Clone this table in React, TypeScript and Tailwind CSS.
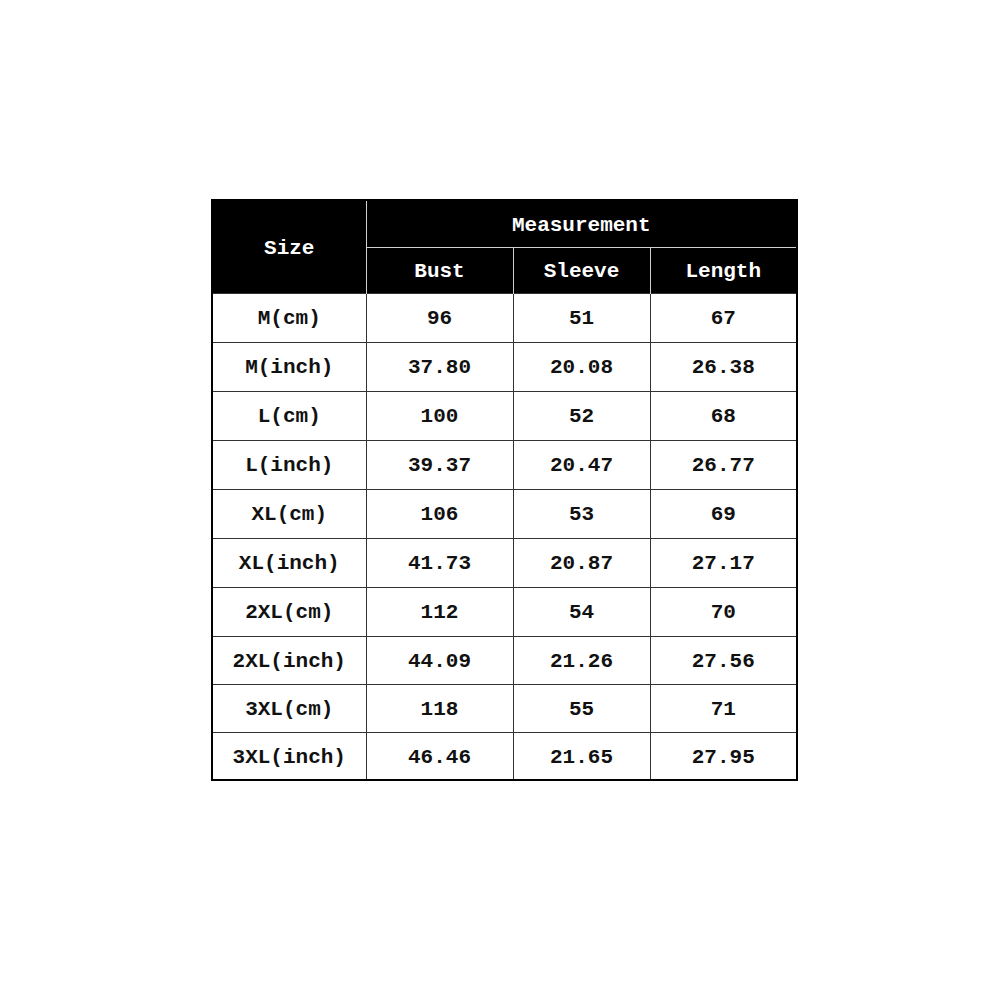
const rows: [string, string, string, string][] = [
  ["M(cm)", "96", "51", "67"],
  ["M(inch)", "37.80", "20.08", "26.38"],
  ["L(cm)", "100", "52", "68"],
  ["L(inch)", "39.37", "20.47", "26.77"],
  ["XL(cm)", "106", "53", "69"],
  ["XL(inch)", "41.73", "20.87", "27.17"],
  ["2XL(cm)", "112", "54", "70"],
  ["2XL(inch)", "44.09", "21.26", "27.56"],
  ["3XL(cm)", "118", "55", "71"],
  ["3XL(inch)", "46.46", "21.65", "27.95"],
];

export default function App() {
  return (
    <div className="min-h-[1000px] w-[1000px] bg-white pt-[199px] pl-[211px] font-['Liberation_Mono',monospace] text-[21px] font-bold">
      <table className="border-collapse border-2 border-black text-center">
        <colgroup>
          <col className="w-[154px]" />
          <col className="w-[147px]" />
          <col className="w-[137px]" />
          <col className="w-[147px]" />
        </colgroup>
        <thead className="bg-black text-white">
          <tr className="h-[47px]">
            <th rowSpan={2} className="border-r border-[#d0d0d0] pt-[4px] font-bold">
              Size
            </th>
            <th colSpan={3} className="border-b border-[#d0d0d0] pt-[3px] font-bold">
              Measurement
            </th>
          </tr>
          <tr className="h-[46px]">
            <th className="border-r border-[#d0d0d0] pt-[3px] font-bold">Bust</th>
            <th className="border-r border-[#d0d0d0] pt-[3px] font-bold">Sleeve</th>
            <th className="pt-[3px] font-bold">Length</th>
          </tr>
        </thead>
        <tbody className="text-[#111]">
          {rows.map((r, ri) => (
            <tr key={r[0]} className={`${ri >= 7 ? "h-[48px]" : "h-[49px]"} border-t border-[#333]`}>
              {r.map((c, i) => (
                <td key={i} className="border-l border-[#333] p-0 pt-[3px]">
                  {c}
                </td>
              ))}
            </tr>
          ))}
        </tbody>
      </table>
    </div>
  );
}
